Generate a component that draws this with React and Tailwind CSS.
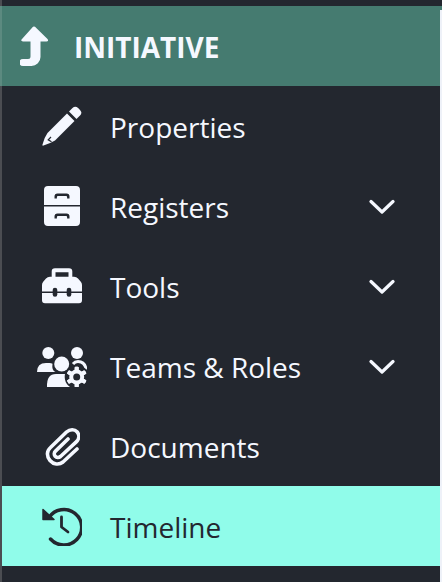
const LevelUpIcon = () => (
  <svg viewBox="0 0 28 40" className="w-7 h-10">
    <path
      fill="currentColor"
      d="M15 .8 27.500 13q1.500 2-1 2.500h-6V31a9 9 0 0 1-9 9H3a3.500 3.500 0 0 1 0-7h5a2.500 2.500 0 0 0 2.500-2.500v-15H3q-3-.5-1-2.500L13 .8q1-.8 2 0z"
    />
  </svg>
);

const PencilIcon = () => (
  <svg viewBox="0 0 40 40" className="w-10 h-10">
    <path fill="currentColor" d="M27 5.500 30.500 2a4 4 0 0 1 5.600 0L38 3.900a4 4 0 0 1 0 5.600L34.500 13z" />
    <path fill="currentColor" d="M25 7.500 32.500 15 13 34.500Q8 37.500 1.500 39.500q-1.500.5-1-1Q2 32 5.500 27z" />
    <path fill="none" stroke="#23272f" strokeWidth="1.200" d="M9 31l-2.800 2.800 3.300 2" />
  </svg>
);

const CabinetIcon = () => (
  <svg viewBox="0 0 36 40" className="w-9 h-10">
    <path
      fill="currentColor"
      fillRule="evenodd"
      d="M4 0h28a4 4 0 0 1 4 4v15H0V4a4 4 0 0 1 4-4zM0 20.500h36V36a4 4 0 0 1-4 4H4a4 4 0 0 1-4-4zM10.500 12.500v-2A3 3 0 0 1 13.500 7.500h9a3 3 0 0 1 3 3v2h-2.400v-1.500a1 1 0 0 0-1-1h-8.200a1 1 0 0 0-1 1v1.500zM10.500 32.500v-2a3 3 0 0 1 3-3h9a3 3 0 0 1 3 3v2h-2.400V31a1 1 0 0 0-1-1h-8.200a1 1 0 0 0-1 1v1.500z"
    />
  </svg>
);

const ToolboxIcon = () => (
  <svg viewBox="0 0 40 36" className="w-10 h-9">
    <path
      fill="currentColor"
      fillRule="evenodd"
      d="M13 .3h14a3.300 3.300 0 0 1 3.300 3.300V9h-3.800V4.300h-13V9H9.700V3.600A3.300 3.300 0 0 1 13 .3z"
    />
    <path fill="currentColor" d="M8 8.700h24q2.500 0 4 1.800l2.800 3.200q1.200 1.400 1.200 3.300v6.500H0V17q0-1.900 1.200-3.300L4 10.500q1.500-1.800 4-1.800zM0 25h40v7.300a3 3 0 0 1-3 3H3a3 3 0 0 1-3-3z" />
    <rect x="10.700" y="19.800" width="4.600" height="9" rx="2.300" fill="#23272f" />
    <rect x="24.700" y="19.800" width="4.600" height="9" rx="2.300" fill="#23272f" />
  </svg>
);

const TeamCogIcon = () => (
  <svg viewBox="0 0 50 41" className="w-[50px] h-[41px]">
    <circle cx="11.300" cy="7" r="6" fill="currentColor" />
    <circle cx="40" cy="7" r="6" fill="currentColor" />
    <path fill="currentColor" d="M0 26q0-9 9-9h3.500q1.800 0 3 .8-1 7 3 8.200z" />
    <path fill="none" stroke="currentColor" strokeWidth="3" d="M36 18q2-2.500 5-2.500 7 0 8 8" />
    <circle cx="24.700" cy="18" r="7.500" fill="currentColor" />
    <path fill="currentColor" d="M10 41q-.5-13 9-13h12q8 0 9 13z" />
    <circle cx="39.700" cy="31" r="12" fill="#23272f" />
    <g fill="currentColor">
      {[0, 60, 120, 180, 240, 300].map((deg) => (
        <rect key={deg} x="37.700" y="20.700" width="4" height="20.600" rx="1" transform={`rotate(${deg} 39.700 31)`} />
      ))}
      <circle cx="39.700" cy="31" r="7.500" />
    </g>
    <circle cx="39.700" cy="31" r="3.500" fill="#23272f" />
  </svg>
);

const PaperclipIcon = () => (
  <svg viewBox="0 0 35 40" className="w-[35px] h-10">
    <path
      fill="none"
      stroke="currentColor"
      strokeWidth="3.600"
      strokeLinecap="round"
      strokeLinejoin="round"
      d="M32 23 18 36c-4 3.300-9.500 2.500-13-1.500s-3.500-9.500.5-13L21.500 6c3.500-3 8-3 10.500-.2s2.500 7-1 10.300L15.500 30.500c-1.800 1.500-4 1.300-5.300-.2s-1.300-3.700.3-5.200L23 13"
    />
  </svg>
);

const HistoryIcon = () => (
  <svg viewBox="0 0 40 40" className="w-10 h-10">
    <path fill="none" stroke="currentColor" strokeWidth="3.500" strokeLinecap="round" d="M7 11.500A17.800 17.800 0 1 1 8.500 33" />
    <path fill="currentColor" stroke="currentColor" strokeWidth="1.500" strokeLinejoin="round" d="M1 3.500V13.500H12z" />
    <path fill="none" stroke="currentColor" strokeWidth="2.800" strokeLinecap="round" strokeLinejoin="round" d="M19.500 11V21L26 26" />
  </svg>
);

const Chevron = () => (
  <svg viewBox="0 0 26 16" className="w-[26px] h-4 text-[#f5f8ff]">
    <path d="M2 3.500 13 14 24 3.500" fill="none" stroke="currentColor" strokeWidth="3.200" strokeLinecap="round" strokeLinejoin="round" />
  </svg>
);

const items = [
  { label: 'Properties', icon: <PencilIcon /> },
  { label: 'Registers', icon: <CabinetIcon />, more: true },
  { label: 'Tools', icon: <ToolboxIcon />, more: true },
  { label: 'Teams & Roles', icon: <TeamCogIcon />, more: true },
  { label: 'Documents', icon: <PaperclipIcon /> },
  { label: 'Timeline', icon: <HistoryIcon />, active: true },
];

export default function App() {
  return (
    <div className="w-[442px] h-[582px] flex overflow-hidden bg-[#23272f] font-['Open_Sans',sans-serif]">
      <div className="w-0.5 flex flex-col bg-[#4b4d52]">
        <div className="h-1.5 shrink-0" />
        <div className="h-20 shrink-0 bg-[#5c8a80]" />
      </div>
      <div className="w-[438px] pt-1.5 flex flex-col">
        <div className="h-20 flex items-center bg-[#457b70] text-[#f5f8ff] pl-[18px]">
          <LevelUpIcon />
          <span className="ml-[26px] pt-0.5 text-[28px] font-bold leading-none">INITIATIVE</span>
        </div>
        {items.map((item) => (
          <div
            key={item.label}
            className={`h-20 flex items-center ${item.active ? 'bg-[#90fcea] text-[#23272f]' : 'text-[#f5f8ff]'}`}
          >
            <div className="w-[50px] ml-[35px] flex justify-center shrink-0">{item.icon}</div>
            <span className="ml-[23px] pt-0.5 flex-1 text-[28px] leading-none">{item.label}</span>
            {item.more && <div className="mr-[45px] flex"><Chevron /></div>}
          </div>
        ))}
      </div>
      <div className="w-0.5 flex flex-col bg-[#eef1f8]">
        <div className="h-1.5 shrink-0 bg-[#23272f]" />
        <div className="h-1 shrink-0 bg-[#457b70]" />
      </div>
    </div>
  );
}
